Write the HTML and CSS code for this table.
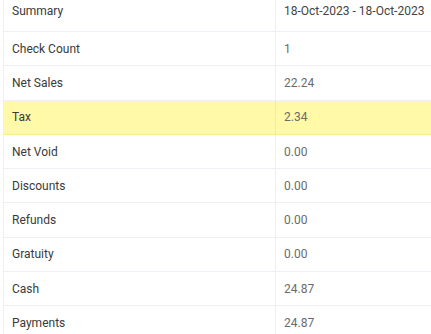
FILE: index.html
```html
<!DOCTYPE html>
<html>
<head>
<meta charset="utf-8">
<link rel="stylesheet" href="styles.css">
</head>
<body>
<div class="table">
  <div class="row head"><div class="label">Summary</div><div class="value">18-Oct-2023 - 18-Oct-2023</div></div>
  <div class="row"><div class="label">Check Count</div><div class="value">1</div></div>
  <div class="row"><div class="label">Net Sales</div><div class="value">22.24</div></div>
  <div class="row hl"><div class="label">Tax</div><div class="value">2.34</div></div>
  <div class="row"><div class="label">Net Void</div><div class="value">0.00</div></div>
  <div class="row"><div class="label">Discounts</div><div class="value">0.00</div></div>
  <div class="row"><div class="label">Refunds</div><div class="value">0.00</div></div>
  <div class="row"><div class="label">Gratuity</div><div class="value">0.00</div></div>
  <div class="row"><div class="label">Cash</div><div class="value">24.87</div></div>
  <div class="row"><div class="label">Payments</div><div class="value">24.87</div></div>
</div>
</body>
</html>
```
FILE: styles.css
```css
html, body {
  margin: 0;
  padding: 0;
  background: #ffffff;
  overflow: hidden;
}
body {
  width: 431px;
  height: 334px;
  padding-left: 3px;
  box-sizing: border-box;
  font-family: Roboto, "Liberation Sans", sans-serif;
  font-size: 12px;
}
.table {
  border-left: 1px solid #eceff3;
  width: 440px;
}
.row {
  display: grid;
  grid-template-columns: 271px 1fr;
  height: 34.3px;
  box-sizing: border-box;
  border-bottom: 1px solid #eceff3;
  align-items: center;
}
.row.head {
  height: 32px;
  align-items: start;
}
.row.head > div {
  padding-top: 3px;
  line-height: 16px;
}
.label {
  padding-left: 8px;
  color: #3a3a3a;
  height: 100%;
  display: flex;
  align-items: center;
  box-sizing: border-box;
}
.value {
  padding-left: 8px;
  color: #6b6b6b;
  border-left: 1px solid #eceff3;
  height: 100%;
  display: flex;
  align-items: center;
  box-sizing: border-box;
}
.row.head .label, .row.head .value {
  align-items: flex-start;
  color: #3a3a3a;
}
.row.head .value {
  color: #444;
}
.row.hl {
  background: #fff9a8;
  border-bottom-color: #f7ec8e;
}
.row.hl .value {
  border-left-color: #f3eca0;
}
```
